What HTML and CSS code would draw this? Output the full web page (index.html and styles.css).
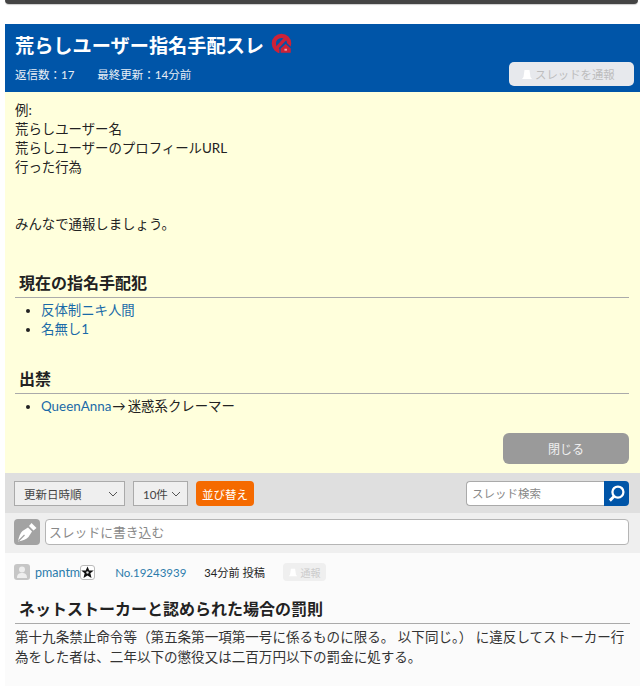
FILE: index.html
```html
<!DOCTYPE html>
<html lang="ja">
<head>
  <meta charset="UTF-8" />
  <title>荒らしユーザー指名手配スレ</title>
  <link rel="stylesheet" href="styles.css">
</head>
<body>

  <div class="topbar"></div>

  <main class="thread">

    <!-- Header -->
    <header class="thread-head">
      <h1>荒らしユーザー指名手配スレ
        <svg class="ban-icon" viewBox="0 0 20 20" width="21" height="21">
          <circle cx="10" cy="10" r="7.300" fill="none" stroke="#cc2238" stroke-width="4"/>
          <path d="M4 16L15 4" stroke="#cc2238" stroke-width="3.200"/>
          <path d="M14 8.500l6 5.500v6H8v-6z" fill="#0055a8"/>
          <path d="M14 10.500l4.800 4.200v4H9.200v-4z" fill="#cc2238"/>
          <rect x="12.800" y="15" width="2.400" height="1.800" fill="#f0a0a8"/>
        </svg>
      </h1>
      <div class="head-row">
        <p class="head-meta"><span>返信数：17</span><span>最終更新：14分前</span></p>
        <button class="report-btn">
          <svg class="bell" viewBox="0 0 12 12" width="12" height="12"><path d="M3.500 2h5l1 7 1.500 2H1l1.500-2z" fill="#fff"/></svg>
          スレッドを通報
        </button>
      </div>
    </header>

    <!-- Description -->
    <section class="desc">
      <p>例:<br>荒らしユーザー名<br>荒らしユーザーのプロフィールURL<br>行った行為</p>
      <p class="call">みんなで通報しましょう。</p>

      <h2 class="first">現在の指名手配犯</h2>
      <ul>
        <li><a href="#">反体制ニキ人間</a></li>
        <li><a href="#">名無し1</a></li>
      </ul>

      <h2>出禁</h2>
      <ul>
        <li><a href="#">QueenAnna</a><span class="arrow">→</span>迷惑系クレーマー</li>
      </ul>

      <div class="close-row"><button class="close-btn">閉じる</button></div>
    </section>

    <!-- Sort and search -->
    <div class="toolbar">
      <div class="select sort">更新日時順<svg viewBox="0 0 10 6" width="10" height="6"><path d="M1 1l4 4 4-4" fill="none" stroke="#555"/></svg></div>
      <div class="select count">10件<svg viewBox="0 0 10 6" width="10" height="6"><path d="M1 1l4 4 4-4" fill="none" stroke="#555"/></svg></div>
      <button class="sort-btn">並び替え</button>
      <div class="search">
        <input placeholder="スレッド検索">
        <button>
          <svg viewBox="0 0 20 20" width="19" height="19">
            <circle cx="11.500" cy="8.500" r="5.800" fill="none" stroke="#fff" stroke-width="2.400"/>
            <path d="M7.500 13L3 17.500" stroke="#fff" stroke-width="3"/>
          </svg>
        </button>
      </div>
    </div>

    <!-- Write -->
    <div class="write">
      <span class="pen">
        <svg viewBox="0 0 26 26" width="26" height="26">
          <path d="M4 22.500c.8-5 2.400-8.500 4.500-10.500l5.500-3.500 4 4-3.500 5.500c-2 2.200-5.500 3.800-10.500 4.500z" fill="#fff"/>
          <path d="M15 7l2.500-3 5 5-3 2.500z" fill="#fff"/>
          <path d="M4.500 22l6-6" stroke="#a3a3a3" stroke-width="1.200"/>
        </svg>
      </span>
      <input placeholder="スレッドに書き込む">
    </div>

    <!-- Post -->
    <article class="post">
      <div class="post-meta">
        <span class="avatar">
          <svg viewBox="0 0 16 16" width="16" height="16"><circle cx="8" cy="5.500" r="3" fill="#eee"/><path d="M3 14c0-4 2-5 5-5s5 1 5 5z" fill="#eee"/></svg>
        </span>
        <a class="user" href="#">pmantm</a>
        <span class="rank">
          <svg viewBox="0 0 14 14" width="14" height="14"><path d="M7 .5l1.900 4.300H13.700l-3.600 3 1.200 5L7 10.200 2.700 12.800l1.200-5-3.600-3h4.800z" fill="#111"/><circle cx="7" cy="7" r="1.300" fill="#ddd"/></svg>
        </span>
        <a class="post-no" href="#">No.19243939</a>
        <span class="post-time">34分前 投稿</span>
        <span class="post-report">
          <svg viewBox="0 0 12 12" width="10" height="10"><path d="M3.500 2h5l1 7 1.500 2H1l1.500-2z" fill="#fff"/></svg>
          通報
        </span>
      </div>
      <h3>ネットストーカーと認められた場合の罰則</h3>
      <p>第十九条禁止命令等（第五条第一項第一号に係るものに限る。 以下同じ。） に違反してストーカー行為をした者は、二年以下の懲役又は二百万円以下の罰金に処する。</p>
    </article>

  </main>
</body>
</html>
```

FILE: styles.css
```css
html, body {
  height: 686px;
  overflow: hidden;
}

body {
  font-family: Lato, 'Noto Sans CJK JP', sans-serif;
  margin: 0;
  background: #fff;
  color: #222;
  font-size: 14px;
}

a {
  color: #1a6aa8;
  text-decoration: none;
}

button, input {
  font-family: inherit;
}

.topbar {
  height: 4px;
  margin: 0 2px 20px 5px;
  background: #444;
  border-radius: 0 0 6px 6px;
  box-shadow: 0 1px 1px rgba(0,0,0,0.2);
}

.thread {
  margin-left: 5px;
}

.thread-head {
  background: #0055a8;
  color: #fff;
  height: 68px;
  padding: 0 6px 0 10px;
  box-sizing: border-box;
}

.thread-head h1 {
  margin: 0;
  padding-top: 9px;
  font-size: 19.200px;
  line-height: 26px;
  font-weight: 700;
  display: flex;
  align-items: center;
  gap: 7px;
}

.ban-icon {
  margin-top: -5px;
}

.head-row {
  display: flex;
  justify-content: space-between;
  align-items: center;
  margin-top: 3px;
}

.head-meta {
  margin: 0;
  font-size: 11.500px;
  color: #e8eef6;
  display: flex;
  gap: 23px;
}

.report-btn {
  width: 125px;
  height: 24px;
  padding: 0 0 0 12px;
  border: none;
  border-radius: 5px;
  background: #e7e9ed;
  color: #bdbdbd;
  font-size: 11.400px;
  display: flex;
  align-items: center;
  gap: 2px;
}

.desc {
  background: #ffffdc;
  height: 381px;
  box-sizing: border-box;
  padding: 9px 11px 0 10px;
  line-height: 19px;
  font-size: 13.400px;
}

.desc p {
  margin: 0;
}

.desc .call {
  margin-top: 38px;
}

.desc h2 {
  margin: 0;
  padding: 0 4px 2px;
  font-size: 16px;
  line-height: 24px;
  font-weight: 700;
  color: #222;
  border-bottom: 1px solid #aaa;
}

.desc h2.first {
  margin-top: 37px;
}

.desc ul {
  margin: 3px 0 28px;
  padding-left: 26px;
}

.arrow {
  margin: 0 2px 0 1px;
}

.close-row {
  display: flex;
  justify-content: flex-end;
  margin-top: -11px;
}

.close-btn {
  width: 126px;
  height: 31px;
  border: none;
  border-radius: 6px;
  background: #9a9a9a;
  color: #f0f0f0;
  font-size: 12px;
}

.toolbar {
  background: #dfdfdf;
  height: 40px;
  padding: 8px 11px 0 9px;
  box-sizing: border-box;
  display: flex;
  align-items: flex-start;
  gap: 8px;
}

.select {
  height: 25px;
  box-sizing: border-box;
  border: 1px solid #aaa;
  background: #efefef;
  font-size: 11.500px;
  display: flex;
  align-items: center;
  justify-content: space-between;
  padding: 0 6px 0 9px;
  color: #444;
}

.sort {
  width: 111px;
}

.count {
  width: 55px;
}

.sort-btn {
  width: 58px;
  height: 25px;
  padding: 0;
  border: none;
  border-radius: 4px;
  background: #f56a00;
  color: #fff;
  font-size: 11.500px;
}

.search {
  margin-left: auto;
  display: flex;
  width: 163px;
  height: 25px;
}

.search input {
  flex: 1;
  min-width: 0;
  box-sizing: border-box;
  border: 1px solid #aaa;
  border-right: none;
  border-radius: 4px 0 0 4px;
  padding: 0 5px;
  font-size: 11.500px;
  background: #fff;
}

.search button {
  width: 25px;
  padding: 0;
  border: none;
  border-radius: 0 4px 4px 0;
  background: #0055a8;
  display: flex;
  align-items: center;
  justify-content: center;
}

.write {
  background: #efefef;
  height: 40px;
  padding: 6px 11px 0 9px;
  box-sizing: border-box;
  display: flex;
  align-items: flex-start;
  gap: 5px;
}

.pen {
  width: 26px;
  height: 26px;
  background: #a3a3a3;
  border-radius: 4px;
}

.write input {
  flex: 1;
  min-width: 0;
  height: 26px;
  box-sizing: border-box;
  border: 1px solid #b5b5b5;
  border-radius: 4px;
  padding: 0 3px;
  font-size: 12.800px;
  background: #fff;
}

input::placeholder {
  color: #888;
}

.post {
  background: #fbfbfb;
  height: 140px;
  padding: 0 10px 0 9px;
  overflow: hidden;
}

.post-meta {
  display: flex;
  align-items: center;
  height: 16px;
  margin-top: 11px;
  font-size: 11.500px;
}

.avatar {
  width: 16px;
  height: 16px;
  background: #c6c6c6;
  border-radius: 3px;
  margin-right: 5px;
}

.user {
  color: #2b7bab;
  font-size: 12.500px;
}

.rank {
  width: 15px;
  height: 15px;
  border: 1px solid #bbb;
  border-radius: 3px;
  box-sizing: border-box;
  display: flex;
  align-items: center;
  justify-content: center;
  background: #fff;
}

.rank svg {
  width: 13px;
  height: 13px;
}

.post-no {
  margin-left: 20px;
  color: #2b7bab;
}

.post-time {
  margin-left: 18px;
  font-size: 11.200px;
}

.post-report {
  margin-left: 18px;
  width: 43px;
  height: 18px;
  border-radius: 4px;
  background: #efefef;
  color: #ccc;
  font-size: 10px;
  display: flex;
  align-items: center;
  justify-content: center;
  gap: 2px;
}

.post h3 {
  margin: 17px 0 0 1px;
  padding: 0 4px 2px;
  font-size: 16px;
  line-height: 24px;
  font-weight: 700;
  border-bottom: 1px solid #aaa;
}

.post p {
  margin: 3px 0 0 1px;
  line-height: 20px;
  font-size: 13.550px;
  color: #333;
}
```
